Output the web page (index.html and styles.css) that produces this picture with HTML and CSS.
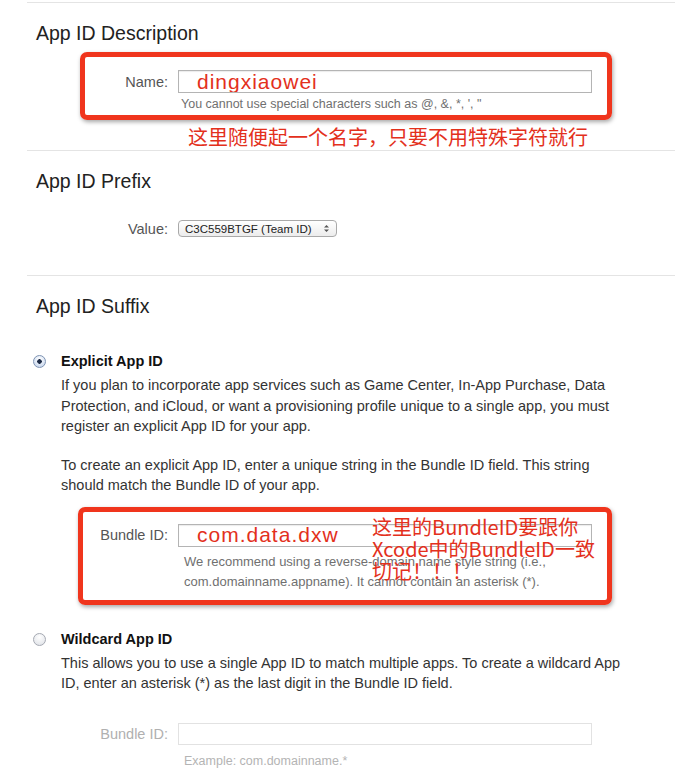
FILE: index.html
```html
<!DOCTYPE html>
<html lang="zh-CN">
<head>
    <meta charset="UTF-8">
    <meta name="viewport" content="width=device-width, initial-scale=1.0">
    <title>Register App ID</title>
    <link rel="stylesheet" href="styles.css">
</head>
<body>

<div class="page">

    <section class="block">
        <h2>App ID Description</h2>
        <div class="mark mark-name">
            <div class="field">
                <label for="name">Name:</label>
                <input type="text" id="name" class="text scribble" value="dingxiaowei">
            </div>
            <p class="hint hint-name">You cannot use special characters such as @, &amp;, *, ', "</p>
        </div>
        <p class="note">这里随便起一个名字，只要不用特殊字符就行</p>
    </section>

    <section class="block block-prefix">
        <h2>App ID Prefix</h2>
        <div class="field field-page">
            <label>Value:</label>
            <span class="select">
                <span>C3C559BTGF (Team ID)</span>
                <svg width="7" height="9" viewBox="0 0 7 9"><path d="M1 3.5 3.5 1 6 3.5z M1 5.5 3.5 8 6 5.5z" fill="#555"/></svg>
            </span>
        </div>
    </section>

    <section class="block">
        <h2>App ID Suffix</h2>

        <div class="option option-first">
            <span class="radio checked"></span>
            <div class="option-body">
                <h3>Explicit App ID</h3>
                <p class="text-p">If you plan to incorporate app services such as Game Center, In-App Purchase, Data Protection, and iCloud, or want a provisioning profile unique to a single app, you must register an explicit App ID for your app.</p>
                <p class="text-p text-p-next">To create an explicit App ID, enter a unique string in the Bundle ID field. This string should match the Bundle ID of your app.</p>

                <div class="mark mark-bundle">
                    <div class="field">
                        <label for="bundle">Bundle ID:</label>
                        <input type="text" id="bundle" class="text scribble" value="com.data.dxw">
                    </div>
                    <p class="hint hint-bundle">We recommend using a reverse-domain name style string (i.e., com.domainname.appname). It cannot contain an asterisk (*).</p>
                    <p class="note note-over">这里的BundleID要跟你<br>Xcode中的BundleID一致<br>切记！！！</p>
                </div>
            </div>
        </div>

        <div class="option option-second">
            <span class="radio"></span>
            <div class="option-body">
                <h3>Wildcard App ID</h3>
                <p class="text-p">This allows you to use a single App ID to match multiple apps. To create a wildcard App ID, enter an asterisk (*) as the last digit in the Bundle ID field.</p>

                <div class="field field-off">
                    <label for="wild">Bundle ID:</label>
                    <input type="text" id="wild" class="text" disabled>
                </div>
                <p class="hint hint-off">Example: com.domainname.*</p>
            </div>
        </div>
    </section>

</div>

</body>
</html>
```

FILE: styles.css
```css
body {
    margin: 0;
    background: #fff;
    font-family: "Liberation Sans", "Noto Sans CJK SC", sans-serif;
    color: #333;
}
.page {
    margin: 0 21px 0 27px;
    padding-top: 2px;
}
.block {
    border-top: 1px solid #e4e4e4;
}
.block-prefix {
    padding-bottom: 38px;
}
h2 {
    margin: 18px 0 0 9px;
    font-size: 19.5px;
    line-height: 24px;
    font-weight: normal;
    color: #222;
}

/* form rows */
.field {
    display: grid;
    grid-template-columns: 83px 414px;
    column-gap: 10px;
    align-items: center;
}
.field label {
    text-align: right;
    font-size: 14.5px;
    color: #555;
}
.field-page {
    grid-template-columns: 141px auto;
    justify-content: start;
    margin-top: 27px;
}
.text {
    box-sizing: border-box;
    height: 23px;
    margin: 0;
    padding: 0 0 0 18px;
    border: 1px solid #b4b4b4;
    box-shadow: inset 0 1px 1px rgba(0, 0, 0, 0.08);
    background: #fff;
    font-family: "Liberation Sans", sans-serif;
    font-size: 14px;
}
.scribble {
    font-size: 21px;
    letter-spacing: 1px;
    color: #e3301c;
}
.select {
    box-sizing: border-box;
    width: 159px;
    height: 17px;
    padding: 0 6px;
    display: flex;
    align-items: center;
    justify-content: space-between;
    border: 1px solid #a9a9a9;
    border-radius: 4px;
    background: linear-gradient(#ffffff, #ececec);
    font-size: 11.5px;
    color: #222;
}
.hint {
    margin: 3px 0 0 96px;
    font-size: 12.5px;
    line-height: 16px;
    color: #707070;
}

/* red annotation boxes */
.mark {
    position: relative;
    border: 5px solid #f0351d;
    border-radius: 7px;
    box-shadow: 1px 2px 4px rgba(0, 0, 0, 0.35);
}
.mark-name {
    width: 522px;
    margin: 7px 0 0 53px;
    padding: 13px 0 3px;
}
.mark-bundle {
    width: 524px;
    margin: 11px 0 0 17px;
    padding: 12px 0 8px;
}
.mark-bundle .field {
    grid-template-columns: 85px 414px;
}
.note {
    margin: 5px 0 1px 161px;
    font-family: "Noto Sans CJK SC", sans-serif;
    font-size: 20px;
    line-height: 24px;
    color: #e3301c;
}
.note-over {
    position: absolute;
    left: 289px;
    top: 4px;
    margin: 0;
    line-height: 22px;
}
.hint-bundle {
    margin: 5px 0 0 101px;
    width: 430px;
    font-size: 13px;
    line-height: 20px;
}

/* radio options */
.option {
    display: grid;
    grid-template-columns: 34px 1fr;
}
.option-first {
    margin-top: 33px;
}
.option-second {
    margin-top: 24px;
}
.radio {
    box-sizing: border-box;
    width: 13px;
    height: 13px;
    margin: 4px 0 0 6px;
    border: 1px solid #a5a9b2;
    border-radius: 50%;
    background: radial-gradient(circle at 50% 30%, #ffffff, #dcdfe5);
}
.radio.checked {
    border-color: #7e93b3;
    background: radial-gradient(circle, #1c2a45 0 2px, transparent 2.5px), radial-gradient(circle at 50% 30%, #ffffff, #bfd0ea);
}
h3 {
    margin: 0;
    font-size: 14.5px;
    line-height: 20px;
    color: #111;
}
.text-p {
    max-width: 566px;
    margin: 4px 0 0;
    font-size: 14.5px;
    line-height: 20.5px;
}
.text-p-next {
    margin-top: 18px;
}

/* disabled wildcard field */
.field-off {
    grid-template-columns: 107px 414px;
    margin-top: 29px;
}
.field-off label {
    color: #b0b0b0;
}
.field-off .text {
    height: 22px;
    border-color: #e2e2e2;
    box-shadow: none;
}
.hint-off {
    margin: 8px 0 0 123px;
    color: #b4b4b4;
}
```
